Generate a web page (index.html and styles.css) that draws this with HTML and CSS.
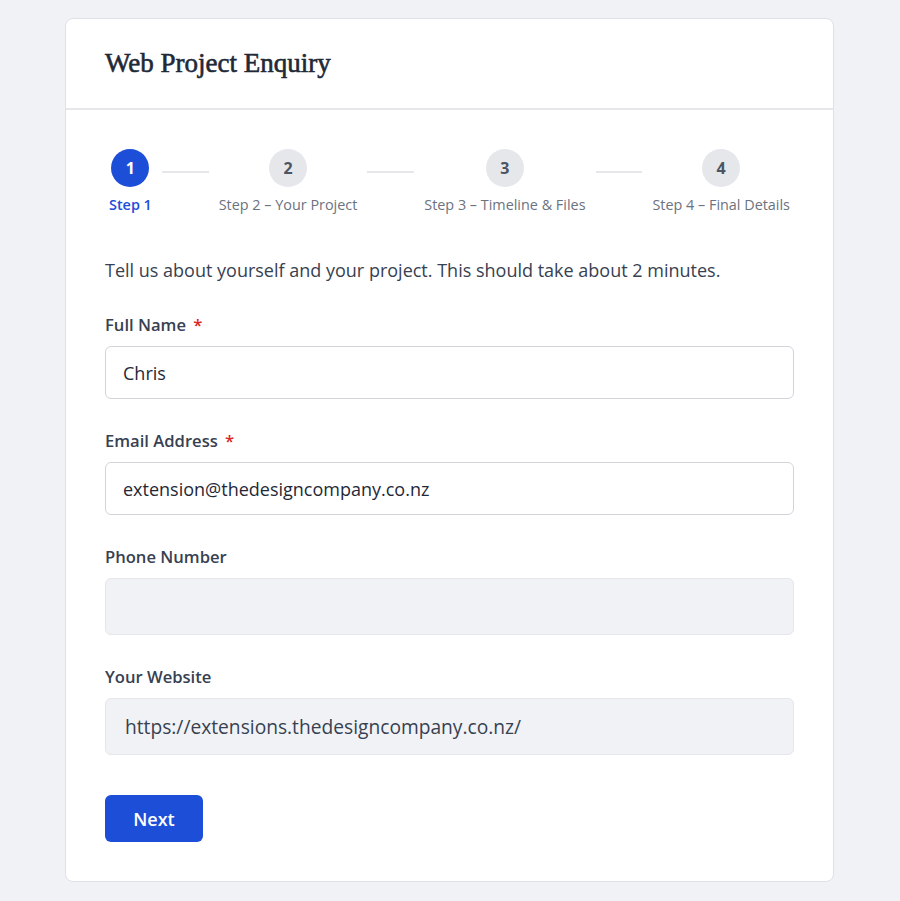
FILE: index.html
```html
<!DOCTYPE html>
<html lang="en">
<head>
<meta charset="utf-8">
<title>Web Project Enquiry</title>
<link rel="stylesheet" href="styles.css">
</head>
<body>
<div class="card">
  <div class="card-header">
    <h1 class="title">Web Project Enquiry</h1>
  </div>
  <div class="card-body">
    <div class="stepper">
      <div class="step active">
        <div class="circle">1</div>
        <div class="step-label">Step 1</div>
      </div>
      <div class="connector"></div>
      <div class="step">
        <div class="circle">2</div>
        <div class="step-label">Step 2 – Your Project</div>
      </div>
      <div class="connector"></div>
      <div class="step">
        <div class="circle">3</div>
        <div class="step-label">Step 3 – Timeline &amp; Files</div>
      </div>
      <div class="connector"></div>
      <div class="step">
        <div class="circle">4</div>
        <div class="step-label">Step 4 – Final Details</div>
      </div>
    </div>

    <p class="intro">Tell us about yourself and your project. This should take about 2 minutes.</p>

    <div class="field">
      <label class="label">Full Name <span class="req">*</span></label>
      <div class="input">Chris</div>
    </div>
    <div class="field">
      <label class="label">Email Address <span class="req">*</span></label>
      <div class="input">extension@thedesigncompany.co.nz</div>
    </div>
    <div class="field">
      <label class="label">Phone Number</label>
      <div class="input disabled"></div>
    </div>
    <div class="field">
      <label class="label">Your Website</label>
      <div class="input disabled">https://extensions.thedesigncompany.co.nz/</div>
    </div>

    <button class="btn">Next</button>
  </div>
</div>
</body>
</html>
```

FILE: styles.css
```css
* { box-sizing: border-box; }
html, body { margin: 0; padding: 0; }
body {
  background: #f1f2f6;
  font-family: "Open Sans", "Noto Sans", sans-serif;
  color: #374151;
  padding: 18px 1px 0 0;
}
.card {
  width: 769px;
  margin: 0 auto;
  background: #fff;
  border: 1px solid #dfe1e6;
  border-radius: 8px;
}
.card-header {
  height: 91px;
  border-bottom: 2px solid #e5e7eb;
  padding: 0 39px;
  display: flex;
  align-items: center;
}
.title {
  margin: 0;
  font-family: "Liberation Serif", "DejaVu Serif", serif;
  font-weight: 400;
  font-size: 27px;
  color: #1f2937;
  -webkit-text-stroke: 0.6px #1f2937;
}
.card-body {
  padding: 39px 39px 39px 39px;
}
.stepper {
  display: flex;
  align-items: flex-start;
  padding: 0 4px;
}
.step {
  display: flex;
  flex-direction: column;
  align-items: center;
}
.circle {
  width: 38px;
  height: 38px;
  border-radius: 50%;
  background: #e5e7eb;
  color: #4b5563;
  font-weight: 700;
  font-size: 16px;
  display: flex;
  align-items: center;
  justify-content: center;
}
.step.active .circle {
  background: #1d4ed8;
  color: #fff;
}
.step-label {
  margin-top: 8px;
  font-size: 14.4px;
  line-height: 20px;
  color: #6b7280;
  white-space: nowrap;
}
.step.active .step-label {
  color: #1d4ed8;
  font-weight: 600;
}
.connector {
  flex: 1;
  height: 2px;
  background: #e5e7eb;
  margin: 22px 10px 0;
}
.intro {
  margin: 41px 0 0;
  font-size: 18px;
  line-height: 28px;
  color: #374151;
}
.field {
  margin-top: 29px;
}
.field + .field { margin-top: 30px; }
.label {
  display: block;
  font-size: 16.6px;
  font-weight: 600;
  line-height: 24px;
  color: #374151;
  margin-bottom: 9px;
}
.req {
  color: #dc2626;
  margin-left: 3px;
}
.input {
  height: 53px;
  border: 1px solid #d1d5db;
  border-radius: 6px;
  padding: 0 17px;
  display: flex;
  align-items: center;
  font-size: 18px;
  color: #1f2937;
  background: #fff;
}
.input.disabled {
  height: 57px;
  background: #f1f2f6;
  border-color: #e5e7eb;
  padding: 0 19px;
  font-size: 19.2px;
  color: #374151;
}
.btn {
  display: block;
  margin-top: 40px;
  width: 98px;
  height: 47px;
  border: none;
  border-radius: 6px;
  background: #1d4ed8;
  color: #fff;
  font-family: "Open Sans", sans-serif;
  font-size: 18px;
  font-weight: 600;
  cursor: pointer;
}
```
